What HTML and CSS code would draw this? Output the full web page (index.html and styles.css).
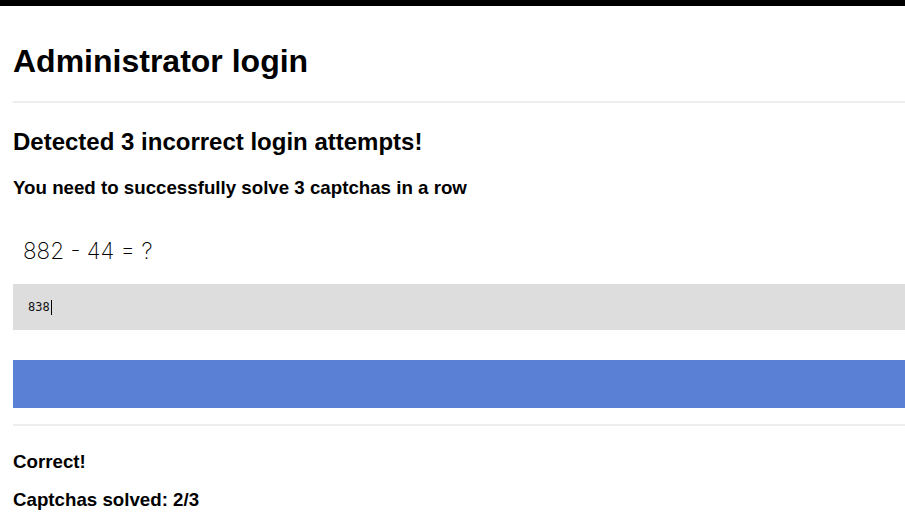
FILE: index.html
```html
<!DOCTYPE html>
<html lang="en">
<head>
<meta charset="utf-8">
<title>Administrator login</title>
<link rel="stylesheet" href="styles.css">
</head>
<body>
<main class="page">
  <h1 class="title">Administrator login</h1>
  <hr class="rule rule-top">
  <h2 class="warning">Detected 3 incorrect login attempts!</h2>
  <p class="note">You need to successfully solve 3 captchas in a row</p>
  <div class="question">882 - 44 = ?</div>
  <div class="field"><span class="value">838</span><span class="caret"></span></div>
  <button class="submit" type="button"></button>
  <hr class="rule rule-bottom">
  <p class="status">Correct!</p>
  <p class="status status-count">Captchas solved: 2/3</p>
</main>
</body>
</html>
```
FILE: styles.css
```css
html, body {
  margin: 0;
  padding: 0;
  background: #fff;
}
body {
  border-top: 6px solid #000;
  font-family: "Liberation Sans", Arial, sans-serif;
  color: #000;
}
.page {
  margin-left: 13px;
  display: flex;
  flex-direction: column;
}
.title {
  margin: 37px 0 0;
  font-size: 32px;
  line-height: 36px;
  font-weight: bold;
}
.rule {
  border: 0;
  height: 2px;
  background: #eeeeee;
  margin: 0;
}
.rule-top {
  margin-top: 22px;
}
.warning {
  margin: 25px 0 0;
  font-size: 24px;
  line-height: 28px;
  font-weight: bold;
}
.note {
  margin: 21px 0 0;
  font-size: 18.72px;
  line-height: 22px;
  font-weight: bold;
}
.question {
  margin-top: 38px;
  padding-left: 10px;
  font-family: Inter, "Liberation Sans", sans-serif;
  font-weight: 250;
  font-size: 22.5px;
  line-height: 28px;
}
.field {
  margin-top: 19px;
  height: 46px;
  background: #dddddd;
  display: flex;
  align-items: center;
  padding-left: 15px;
  font-family: "DejaVu Sans Mono", monospace;
  font-size: 12px;
  color: #111;
}
.caret {
  display: inline-block;
  width: 1px;
  height: 15px;
  background: #000;
  margin-left: 1px;
}
.submit {
  margin-top: 30px;
  height: 48px;
  border: 0;
  padding: 0;
  background: #5a80d6;
  display: block;
  width: 100%;
}
.rule-bottom {
  margin-top: 16px;
}
.status {
  margin: 25px 0 0;
  font-size: 18.72px;
  line-height: 22px;
  font-weight: bold;
}
.status-count {
  margin-top: 16px;
}
```
